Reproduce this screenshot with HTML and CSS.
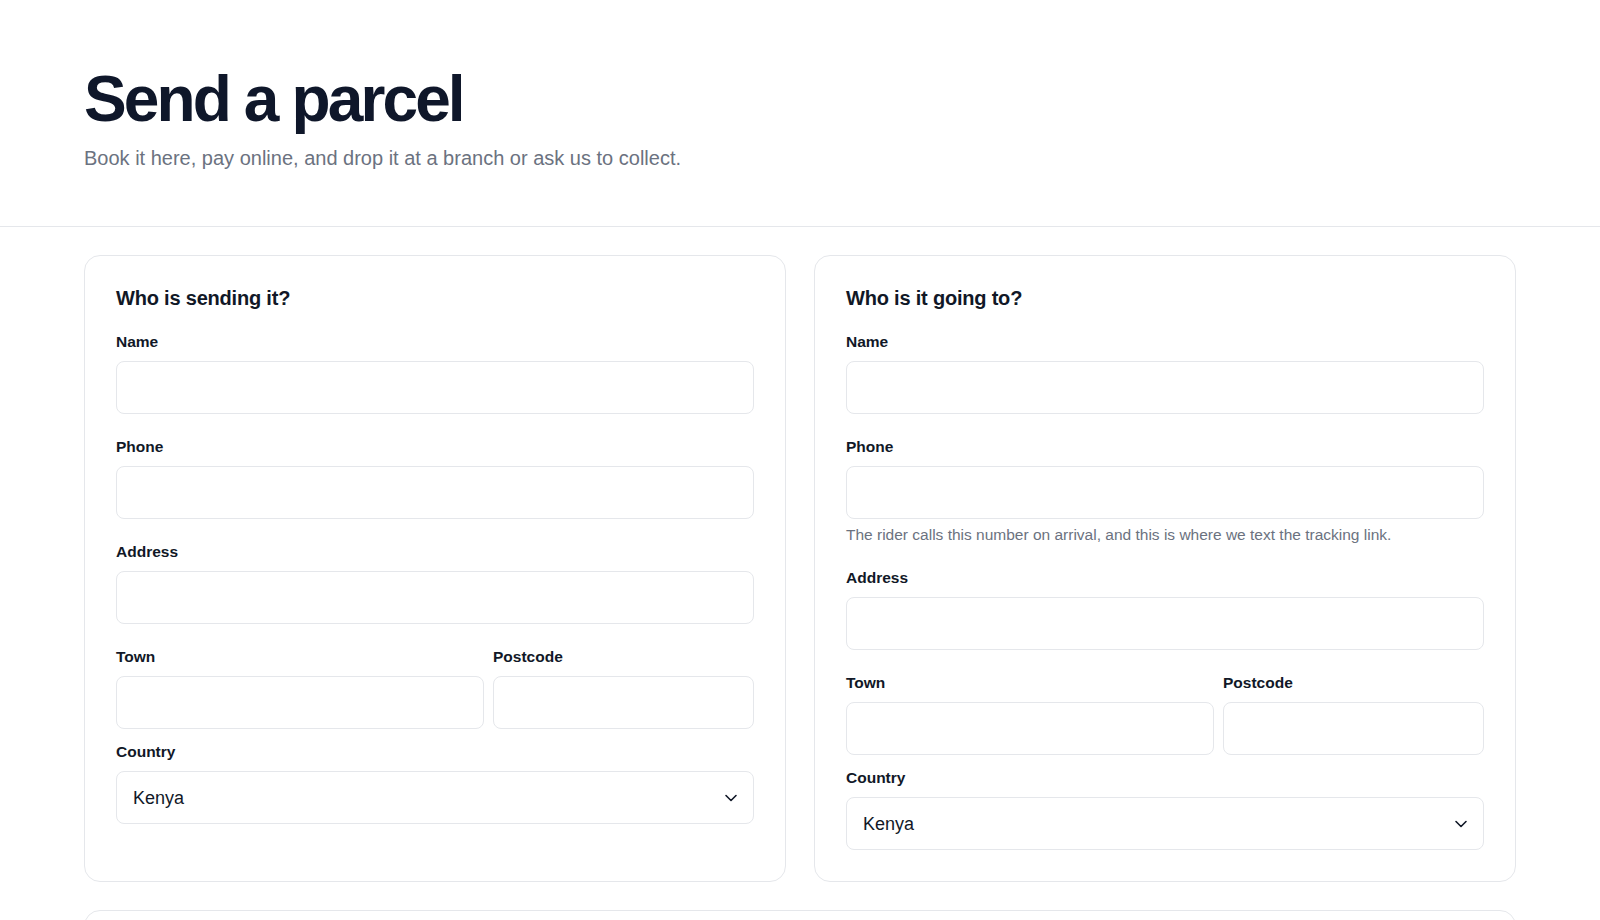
FILE: index.html
```html
<!DOCTYPE html>
<html lang="en">
<head>
<meta charset="utf-8">
<title>Send a parcel</title>
<link rel="stylesheet" href="styles.css">
</head>
<body>
<header class="page-header">
  <h1 class="page-title">Send a parcel</h1>
  <p class="page-subtitle">Book it here, pay online, and drop it at a branch or ask us to collect.</p>
</header>
<main class="page-main">
  <section class="card">
    <h2 class="card-title">Who is sending it?</h2>
    <div class="field">
      <label class="field-label" for="s-name">Name</label>
      <input class="field-input" id="s-name" type="text">
    </div>
    <div class="field">
      <label class="field-label" for="s-phone">Phone</label>
      <input class="field-input" id="s-phone" type="tel">
    </div>
    <div class="field">
      <label class="field-label" for="s-address">Address</label>
      <input class="field-input" id="s-address" type="text">
    </div>
    <div class="field-row">
      <div class="field">
        <label class="field-label" for="s-town">Town</label>
        <input class="field-input" id="s-town" type="text">
      </div>
      <div class="field">
        <label class="field-label" for="s-postcode">Postcode</label>
        <input class="field-input" id="s-postcode" type="text">
      </div>
    </div>
    <div class="field">
      <label class="field-label" for="s-country">Country</label>
      <div class="select-wrap">
        <select class="field-select" id="s-country">
          <option>Kenya</option>
          <option>Uganda</option>
          <option>Tanzania</option>
        </select>
        <svg class="select-chevron" width="14" height="14" viewBox="0 0 14 14" aria-hidden="true"><path d="M2 4.5 L7 9.5 L12 4.5" fill="none" stroke="#111827" stroke-width="1.6" stroke-linecap="round" stroke-linejoin="round"/></svg>
      </div>
    </div>
  </section>
  <section class="card">
    <h2 class="card-title">Who is it going to?</h2>
    <div class="field">
      <label class="field-label" for="r-name">Name</label>
      <input class="field-input" id="r-name" type="text">
    </div>
    <div class="field">
      <label class="field-label" for="r-phone">Phone</label>
      <input class="field-input" id="r-phone" type="tel">
      <p class="field-help">The rider calls this number on arrival, and this is where we text the tracking link.</p>
    </div>
    <div class="field">
      <label class="field-label" for="r-address">Address</label>
      <input class="field-input" id="r-address" type="text">
    </div>
    <div class="field-row">
      <div class="field">
        <label class="field-label" for="r-town">Town</label>
        <input class="field-input" id="r-town" type="text">
      </div>
      <div class="field">
        <label class="field-label" for="r-postcode">Postcode</label>
        <input class="field-input" id="r-postcode" type="text">
      </div>
    </div>
    <div class="field">
      <label class="field-label" for="r-country">Country</label>
      <div class="select-wrap">
        <select class="field-select" id="r-country">
          <option>Kenya</option>
          <option>Uganda</option>
          <option>Tanzania</option>
        </select>
        <svg class="select-chevron" width="14" height="14" viewBox="0 0 14 14" aria-hidden="true"><path d="M2 4.5 L7 9.5 L12 4.5" fill="none" stroke="#111827" stroke-width="1.6" stroke-linecap="round" stroke-linejoin="round"/></svg>
      </div>
    </div>
  </section>
  <section class="card card-wide" aria-label="Parcel details"></section>
</main>
</body>
</html>
```

FILE: styles.css
```css
* {
  box-sizing: border-box;
}

html, body {
  margin: 0;
  padding: 0;
  background: #ffffff;
}

body {
  font-family: "Liberation Sans", Arial, Helvetica, sans-serif;
  color: #111827;
}

.page-header {
  padding: 64px 84px 53px;
  border-bottom: 1px solid #e5e7eb;
}

.page-title {
  margin: 0;
  font-size: 64px;
  line-height: 1.1;
  font-weight: 700;
  letter-spacing: -0.045em;
  color: #0f172a;
}

.page-subtitle {
  margin: 9px 0 0;
  font-size: 20px;
  line-height: 30px;
  color: #6b7280;
}

.page-main {
  display: grid;
  grid-template-columns: 1fr 1fr;
  gap: 28px;
  padding: 28px 84px;
}

.card {
  border: 1px solid #e5e7eb;
  border-radius: 16px;
  padding: 31px;
  background: #ffffff;
}

.card-wide {
  grid-column: 1 / -1;
  min-height: 200px;
}

.card-title {
  margin: 0 0 23px;
  font-size: 20px;
  line-height: 22px;
  font-weight: 700;
  letter-spacing: -0.01em;
  color: #111827;
}

.field {
  margin-bottom: 23px;
}

.field:last-child {
  margin-bottom: 0;
}

.field-row {
  display: grid;
  grid-template-columns: 1.41fr 1fr;
  gap: 9px;
  margin-bottom: 13px;
}

.field-row .field {
  margin-bottom: 0;
}

.field-label {
  display: block;
  margin-bottom: 9px;
  font-size: 15.5px;
  line-height: 20px;
  font-weight: 700;
  color: #111827;
}

.field-input,
.field-select {
  display: block;
  width: 100%;
  height: 53px;
  padding: 0 16px;
  border: 1px solid #e5e7eb;
  border-radius: 8px;
  background: #ffffff;
  font-family: inherit;
  font-size: 18px;
  color: #111827;
  outline: none;
}

.field-select {
  appearance: none;
  -webkit-appearance: none;
  padding-right: 44px;
}

.select-wrap {
  position: relative;
}

.select-chevron {
  position: absolute;
  right: 16px;
  top: 50%;
  margin-top: -7px;
  pointer-events: none;
}

.field-help {
  margin: 6px 0 0;
  font-size: 15.5px;
  line-height: 20px;
  color: #6b7280;
}
```
